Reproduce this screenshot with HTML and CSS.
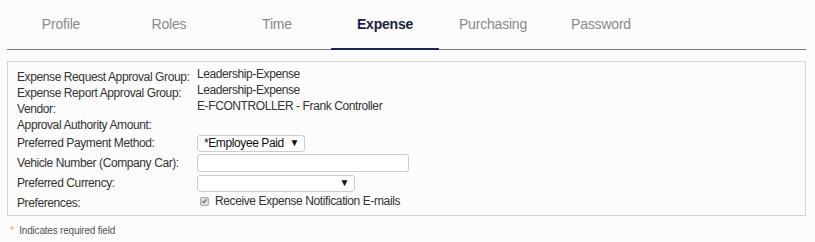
FILE: index.html
```html
<!DOCTYPE html>
<html lang="en">
<head>
    <meta charset="UTF-8">
    <title>User Settings - Expense</title>
    <link rel="stylesheet" href="styles.css">
</head>
<body>
    <!-- Tabs -->
    <nav class="tabs">
        <a class="tab" href="#">Profile</a>
        <a class="tab" href="#">Roles</a>
        <a class="tab" href="#">Time</a>
        <a class="tab active" href="#">Expense</a>
        <a class="tab" href="#">Purchasing</a>
        <a class="tab" href="#">Password</a>
    </nav>

    <!-- Expense settings -->
    <section class="panel">
        <div class="row">
            <span class="label">Expense Request Approval Group:</span>
            <span class="value">Leadership-Expense</span>
        </div>
        <div class="row">
            <span class="label">Expense Report Approval Group:</span>
            <span class="value">Leadership-Expense</span>
        </div>
        <div class="row">
            <span class="label">Vendor:</span>
            <span class="value">E-FCONTROLLER - Frank Controller</span>
        </div>
        <div class="row">
            <span class="label">Approval Authority Amount:</span>
            <span class="value"></span>
        </div>
        <div class="row field first">
            <span class="label">Preferred Payment Method:</span>
            <div class="select small">
                <span>*Employee Paid</span>
                <span class="arrow">&#9660;</span>
            </div>
        </div>
        <div class="row field">
            <span class="label">Vehicle Number (Company Car):</span>
            <input class="text-input" type="text">
        </div>
        <div class="row field">
            <span class="label">Preferred Currency:</span>
            <div class="select wide">
                <span></span>
                <span class="arrow">&#9660;</span>
            </div>
        </div>
        <div class="row prefs">
            <span class="label">Preferences:</span>
            <label class="check">
                <span class="box">
                    <svg viewBox="0 0 10 10" width="8" height="8"><path d="M2 5.2 L4 7.2 L8 2.8" fill="none" stroke="#555" stroke-width="1.6"/></svg>
                </span>
                Receive Expense Notification E-mails
            </label>
        </div>
    </section>

    <p class="note"><span class="req">*</span> Indicates required field</p>
</body>
</html>
```

FILE: styles.css
```css
* {
    margin: 0;
    padding: 0;
    box-sizing: border-box;
}

body {
    background-color: #fbfcfb;
    font-family: "Liberation Sans", Arial, sans-serif;
    color: #333;
    padding: 0 9px 0 7px;
}

/* Tabs */
.tabs {
    display: flex;
    border-bottom: 1px solid #777;
    height: 50px;
}

.tab {
    width: 108px;
    text-align: center;
    padding-top: 16px;
    font-size: 14px;
    letter-spacing: -0.2px;
    color: #8a8a8a;
    text-decoration: none;
}

.tab.active {
    color: #1b2140;
    font-weight: bold;
    border-bottom: 2px solid #1c2656;
    margin-bottom: -1px;
}

/* Panel */
.panel {
    margin-top: 11px;
    border: 1px solid #d4d4d4;
    padding: 6px 9px 5px;
}

.row {
    display: flex;
    align-items: center;
    font-size: 12px;
    letter-spacing: -0.4px;
    white-space: nowrap;
    height: 16px;
    line-height: 16px;
}

.label {
    width: 180px;
    flex-shrink: 0;
    position: relative;
    top: 1px;
}

.value {
    position: relative;
    top: -2px;
}

.row.field {
    height: 20px;
}

.row.field .label {
    top: 0;
}

.row.first {
    margin-top: 1px;
}

.row.prefs {
    margin-top: 1px;
}

.select {
    display: flex;
    justify-content: space-between;
    align-items: center;
    height: 17px;
    border: 1px solid #ccc;
    border-radius: 3px;
    background: #fff;
    padding: 0 5px 0 6px;
    color: #111;
}

.select.small {
    width: 108px;
}

.select.wide {
    width: 158px;
}

.arrow {
    font-size: 10px;
    color: #111;
}

.text-input {
    width: 212px;
    height: 18px;
    border: 1px solid #ccc;
    border-radius: 3px;
    background: #fff;
}

.check {
    display: flex;
    align-items: center;
    gap: 6px;
    padding-left: 3px;
    position: relative;
    top: -1px;
}

.box {
    display: flex;
    align-items: center;
    justify-content: center;
    width: 9px;
    height: 9px;
    border: 1px solid #aaa;
    border-radius: 2px;
    background: #ddd;
}

/* Footer note */
.note {
    margin-top: 9px;
    font-size: 10px;
    line-height: 12px;
    letter-spacing: -0.2px;
    color: #555;
    padding-left: 3px;
}

.req {
    color: #f5a623;
    margin-right: 3px;
}
```
